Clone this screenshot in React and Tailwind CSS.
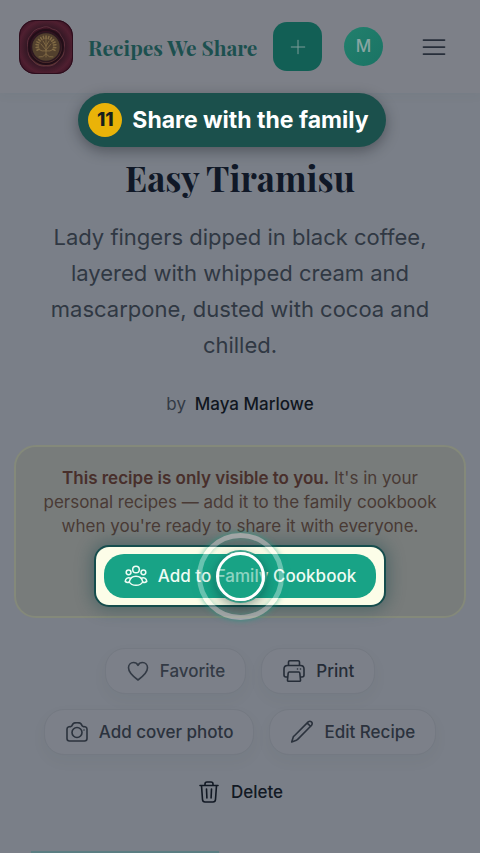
import React from "react";

function Icon({ children, className = "size-6", strokeWidth = 1.6 }) {
  return (
    <svg
      className={className}
      viewBox="0 0 24 24"
      fill="none"
      stroke="currentColor"
      strokeWidth={strokeWidth}
      strokeLinecap="round"
      strokeLinejoin="round"
      aria-hidden="true"
    >
      {children}
    </svg>
  );
}

function Logo() {
  const leaves = Array.from({ length: 15 }, (_, i) => {
    const a = ((-205 + i * 16.5) * Math.PI) / 180;
    return { x: 27 + Math.cos(a) * 10, y: 26 + Math.sin(a) * 10, x2: 27 + Math.cos(a) * 7.5, y2: 26 + Math.sin(a) * 7.5 };
  });
  return (
    <svg className="size-[54px] shrink-0" viewBox="0 0 54 54" role="img" aria-label="Recipes We Share logo">
      <defs>
        <radialGradient id="sealBase" cx="50%" cy="50%" r="68%">
          <stop offset="0.45" stopColor="#2a1520" />
          <stop offset="0.72" stopColor="#4f1f30" />
          <stop offset="1" stopColor="#2b0b1b" />
        </radialGradient>
        <linearGradient id="sealWax" x1="0" y1="0" x2="0.3" y2="1">
          <stop offset="0" stopColor="#421526" />
          <stop offset="0.55" stopColor="#2c121e" />
          <stop offset="1" stopColor="#573330" />
        </linearGradient>
      </defs>
      <rect width="54" height="54" rx="16" fill="url(#sealBase)" />
      <rect x="0.5" y="0.5" width="53" height="53" rx="15.5" fill="none" stroke="#2c0d1c" />
      <path d="M22 8q6-3 11 1 7 1 9 7 5 6 3 12 1 8-5 12-5 7-13 6-8 1-13-5-6-5-5-13-2-8 3-13 3-6 10-7Z" fill="url(#sealWax)" stroke="#633340" strokeWidth="0.8" />
      <circle cx="27" cy="27" r="17" fill="none" stroke="#220e18" strokeWidth="2" />
      <circle cx="27" cy="27" r="14.5" fill="#52402d" stroke="#2c1820" strokeWidth="1.5" />
      <g stroke="#826b45" strokeWidth="0.9" fill="none" strokeLinecap="round">
        <path d="M27 18v19M27 30l-5-6M27 30l5-6M27 26l-3-5M27 26l3-5M27 34q-3 4-7 3M27 34q3 4 7 3M27 31q-4 1-8-2M27 31q4 1 8-2" />
        {leaves.map((l, i) => (
          <path key={i} d={`M${l.x2} ${l.y2}L${l.x} ${l.y}`} strokeWidth="1.5" />
        ))}
      </g>
    </svg>
  );
}

function Action({ label, children, tone = "text-[#2b323d]" }) {
  return (
    <button
      type="button"
      className={"flex h-[46px] items-center gap-[10px] rounded-[20px] border border-[#747982] bg-[#7c8089] px-5 text-[17px] leading-6 font-medium shadow-[0_6px_16px_rgba(35,50,60,0.04)] " + tone}
    >
      {children}
      {label}
    </button>
  );
}

export default function App() {
  return (
    <div className="relative h-screen overflow-hidden bg-[#7a7f88] font-['Inter','Liberation_Sans',sans-serif]">
      <header className="flex h-[93px] items-center bg-[#7d8088] pr-8 pl-[19px] shadow-[0_2px_10px_rgba(50,85,90,0.06)]">
        <Logo />
        <a href="#home" className="ml-[15px] flex-1 font-['Playfair_Display','Liberation_Serif',serif] text-[21px] leading-8 font-bold whitespace-nowrap text-[#1c504f]">
          Recipes We Share
        </a>
        <button type="button" aria-label="Add recipe" className="flex size-[49px] shrink-0 items-center justify-center rounded-[14px] bg-[#125f55] text-[#819e9b]">
          <Icon className="size-[18px]" strokeWidth={1.3}><path d="M12 3v18M3 12h18" /></Icon>
        </button>
        <button type="button" aria-label="Account" className="ml-[22px] flex size-[39px] shrink-0 items-center justify-center rounded-full bg-linear-to-br from-[#22806d] to-[#1a7364] text-[17px] font-medium text-[#88a5a2]">
          M
        </button>
        <button type="button" aria-label="Menu" className="ml-[37px] flex size-7 shrink-0 items-center justify-center text-[#272e3a]">
          <Icon className="size-7" strokeWidth={1.5}><path d="M3 6h18M3 12h18M3 18h18" /></Icon>
        </button>
      </header>

      <main className="px-[14px] pt-[62px] text-center">
        <h1 className="font-['Playfair_Display','Liberation_Serif',serif] text-[35px] leading-[46px] font-bold text-[#101827]">Easy Tiramisu</h1>
        <p className="mx-auto mt-[18px] max-w-[400px] text-[22px] leading-[36px] text-[#303843]">
          Lady fingers dipped in black coffee, layered with whipped cream and mascarpone, dusted with cocoa and chilled.
        </p>
        <p className="mt-[29px] text-[17px] leading-6 text-[#333a45]">
          by <a href="#author" className="ml-1 font-medium text-[#101620]">Maya Marlowe</a>
        </p>

        <section className="mt-[29px] rounded-[22px] border-2 border-[#84897a] bg-[#787c7b] px-6 pt-[19px] pb-[11px]">
          <p className="text-[17px] leading-6 text-[#493a35]">
            <strong className="font-semibold text-[#482f2b]">This recipe is only visible to you.</strong> It's in your personal recipes — add it to the family cookbook when you're ready to share it with everyone.
          </p>
          <div className="relative mx-auto mt-[9px] w-fit rounded-[13px] bg-[#fcfde8] px-2 py-[7px] shadow-[0_0_0_2px_#164d4d,0_0_16px_5px_rgba(22,70,72,0.4)]">
            <button type="button" className="flex h-11 items-center gap-[10px] rounded-[20px] bg-[#18a386] px-5 text-[17px] leading-6 font-medium whitespace-nowrap text-[#effcf4]">
              <Icon strokeWidth={1.5}>
                <circle cx="12" cy="5.5" r="3.3" />
                <circle cx="4.6" cy="8.3" r="2.4" />
                <circle cx="19.4" cy="8.3" r="2.4" />
                <path d="M12 12.200c-3.700 0-6.200 2.600-6.700 5.800 1.200 2.100 3.500 3.300 6.700 3.300s5.500-1.200 6.700-3.300c-.5-3.200-3-5.800-6.700-5.800Z" />
                <path d="M6.700 14.300C4.300 12.700 1.500 14.300 1.200 17.400c1.200 1.200 2.700 1.300 4.100.6M17.300 14.300c2.400-1.600 5.200 0 5.500 3.100-1.200 1.200-2.700 1.300-4.100.6" />
              </Icon>
              Add to Family Cookbook
            </button>
            <div className="pointer-events-none absolute inset-0 flex items-center justify-center">
              <div className="flex size-[87px] shrink-0 items-center justify-center rounded-full border-[5px] border-white/35 shadow-[0_0_5px_1px_rgba(24,163,134,0.5),inset_0_0_5px_rgba(24,163,134,0.4)]">
                <div className="size-[49px] rounded-full border-[3px] border-white bg-[#18a386]/45 shadow-[0_0_0_2px_rgba(24,145,123,0.8),0_5px_14px_rgba(0,40,40,0.5)]" />
              </div>
            </div>
          </div>
        </section>

        <div className="mt-[30px] flex flex-wrap justify-center gap-x-[15px] gap-y-[15px]">
          <Action label="Favorite" tone="text-[#333a45]">
            <Icon><path d="M12 21C8.500 18.500 2.500 14 2.500 8.800 2.500 5.700 4.700 3.500 7.500 3.500c1.900 0 3.600 1 4.500 2.800.9-1.800 2.600-2.800 4.500-2.800 2.800 0 5 2.200 5 5.300C21.500 14 15.500 18.500 12 21Z" /></Icon>
          </Action>
          <Action label="Print" tone="text-[#252c37]">
            <Icon>
              <path d="M6.500 6.500V3q0-1.300 1.300-1.300h8.400q1.300 0 1.300 1.300v3.500M5.500 18H4q-2 0-2-2v-6q0-3.500 3.500-3.500h13Q22 6.500 22 10v6q0 2-2 2h-1.500M7.300 13h9.400q1 0 1.100 1l.7 7q.1 1.300-1.200 1.300H6.700q-1.300 0-1.200-1.300l.7-7q.1-1 1.100-1ZM15.500 10h.010M18.500 10h.010" />
            </Icon>
          </Action>
          <Action label="Add cover photo">
            <Icon>
              <path d="M6.700 6 7.900 4q.6-1 1.900-1.100 2.200-.2 4.400 0Q15.500 3 16.100 4l1.200 2q.4.500 1.200.6l1.600.2q1.900.3 1.900 2.200v9.500q0 2.500-2.500 2.500h-15Q2 21 2 18.500V9q0-1.900 1.900-2.200l1.600-.2q.8-.1 1.200-.6Z" />
              <circle cx="12" cy="12.500" r="5" />
              <path d="M19 10h.010" />
            </Icon>
          </Action>
          <Action label="Edit Recipe">
            <Icon><path d="M3.900 16.200 18.200 1.900q1.700-1.300 3.200 0 1.500 1.500.2 3.300L7.400 19.600q-.4.500-1 .7L1.700 22l1.500-4.800q.2-.6.7-1ZM17.200 3l3.400 3.400" /></Icon>
          </Action>
        </div>
        <button type="button" className="mx-auto mt-[14px] flex h-[46px] items-center gap-[10px] px-5 text-[17px] leading-6 font-medium text-[#121924]">
          <Icon><path d="M3 5.500h18M8 5.500V4q0-2 2-2h4q2 0 2 2v1.500M4.500 5.500l1 14q.200 2.500 2.500 2.500h8q2.300 0 2.500-2.500l1-14M9.500 9l.4 9M14.500 9l-.4 9" /></Icon>
          Delete
        </button>
      </main>

      <div className="absolute bottom-0 left-[31px] h-[2px] w-[188px] bg-[#5b7d82]" />

      <div className="absolute inset-x-0 top-[93px] flex justify-center">
        <div className="mr-4 flex h-[54px] items-center gap-[10px] rounded-full bg-[#1b504c] pr-[17px] pl-[10px] shadow-[0_4px_14px_rgba(20,25,30,0.4)]">
          <span className="flex size-[34px] items-center justify-center rounded-full bg-[#eab308] text-[19px] font-extrabold text-[#17201c]">11</span>
          <span className="text-[23px] leading-8 font-bold whitespace-nowrap text-white">Share with the family</span>
        </div>
      </div>
    </div>
  );
}
